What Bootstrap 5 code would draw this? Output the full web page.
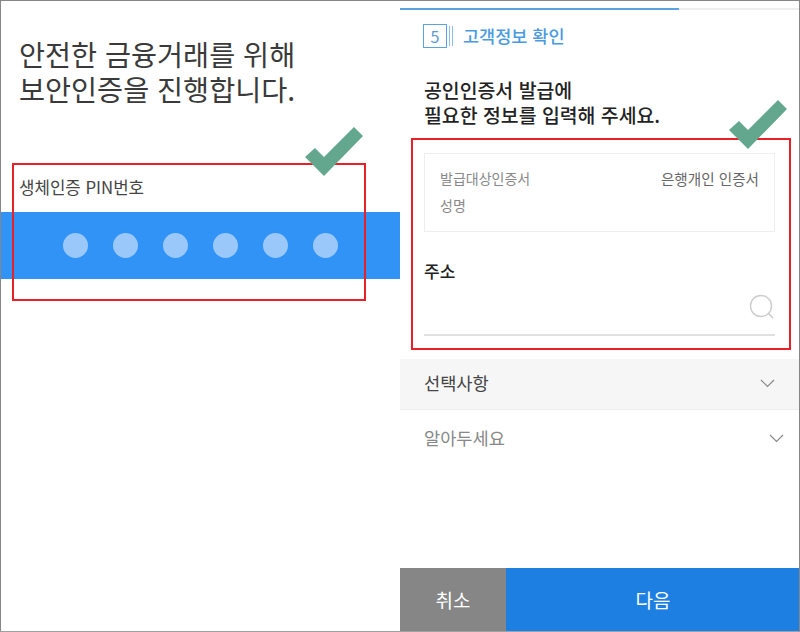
<!DOCTYPE html>
<html lang="ko">
<head>
<meta charset="utf-8">
<title>보안인증</title>
<link rel="stylesheet" href="https://cdn.jsdelivr.net/npm/bootstrap@5.3.0/dist/css/bootstrap.min.css">
<style>
html,body{margin:0;height:632px;overflow:hidden;background:#fff;font-family:"Noto Sans CJK KR","Noto Sans",sans-serif}
.stage{position:relative;width:800px;height:632px;overflow:hidden}
.frame-edge{position:absolute;inset:0;border:1px solid #868686;border-bottom-color:#a0a0a0;pointer-events:none}
.pane{width:400px;height:632px}
.secure-title{font-size:28.3px;line-height:35px;font-weight:400;color:#3a3a3a;margin:36px 0 0 19px}
.pin-label{font-size:16.8px;line-height:24px;color:#444;margin:69px 0 0 19px}
.pin-bar{height:67px;margin-top:13px;background:#3193f5;gap:25px;padding-left:63px}
.pin-dot{width:25px;height:25px;border-radius:50%;background:#9ac8fb}
.progress-track{height:2px;margin-top:8px;background:#eee}
.progress-fill{height:2px;width:279px;background:#5ba3e0}
.step-row{margin:14px 0 0 23px;height:24px}
.step-box{width:24px;height:24px;border:1px solid #5ba3e0;color:#5b9bd5;font-size:16px;line-height:22px;text-align:center}
.step-line{width:1px;height:20px;background:#8cbde8;margin-left:2px}
.step-title{font-size:17.5px;line-height:22px;font-weight:500;color:#4a9ae0;margin-left:10px}
.lead-text{font-size:19.4px;line-height:25px;font-weight:500;color:#222;margin:29px 0 0 24px}
.info-box{width:351px;height:79px;margin:26px 0 0 24px;border:1px solid #eee;border-radius:0;padding:11px 15px 0;font-size:14px;line-height:27px;color:#888}
.info-value{color:#666;font-size:14.6px}
.addr-label{font-size:17px;line-height:24px;font-weight:500;color:#222;margin:27px 0 0 24px}
.addr-field{width:351px;height:53px;margin:0 0 0 24px;border-bottom:2px solid #e0e0e0;padding-top:11px}
.fold-list{margin-top:23px}
.fold-row{height:51px;border-width:0 0 2px;border-style:solid;border-color:#eee;padding:0 25px 2px 24px;font-size:17.6px;background:#f6f6f6;color:#444;border-radius:0}
.fold-row.plain{height:58px;background:#fff;color:#888;padding-right:16px;padding-bottom:2px}
.action-bar{height:64px}
.btn-cancel,.btn-next{border:0;border-radius:0;color:#fff;font-size:19px;height:64px;padding:0}
.btn-cancel{width:106px;background:#868686}
.btn-next{flex:1;background:#1e7fe2}
.red-box{position:absolute;border:2px solid #e8202a}
.box-a{left:12px;top:163px;width:354px;height:138px}
.box-b{left:411px;top:138px;width:380px;height:212px}
.tick{position:absolute;width:58px;height:49px}
.tick-a{left:305px;top:127px}
.tick-b{left:729px;top:100px}
</style>
</head>
<body>
<div class="stage">
  <div class="d-flex">
    <section class="pane">
      <h1 class="secure-title">안전한 금융거래를 위해<br>보안인증을 진행합니다.</h1>
      <div class="pin-label">생체인증 PIN번호</div>
      <div class="pin-bar d-flex align-items-center">
        <span class="pin-dot"></span><span class="pin-dot"></span><span class="pin-dot"></span><span class="pin-dot"></span><span class="pin-dot"></span><span class="pin-dot"></span>
      </div>
    </section>
    <section class="pane d-flex flex-column">
      <div class="progress-track"><div class="progress-fill"></div></div>
      <div class="step-row d-flex align-items-center">
        <span class="step-box">5</span><span class="step-line"></span><span class="step-line"></span>
        <span class="step-title">고객정보 확인</span>
      </div>
      <p class="lead-text mb-0">공인인증서 발급에<br>필요한 정보를 입력해 주세요.</p>
      <div class="card info-box">
        <div class="d-flex justify-content-between"><span>발급대상인증서</span><span class="info-value">은행개인 인증서</span></div>
        <div>성명</div>
      </div>
      <div class="addr-label">주소</div>
      <div class="addr-field d-flex justify-content-end">
        <svg width="26" height="26" viewBox="0 0 26 26" fill="none" stroke="#ccc" stroke-width="1.4"><circle cx="12" cy="12" r="10.5"/><path d="M19.5 19.5L24 24" stroke-width="1.6"/></svg>
      </div>
      <div class="list-group list-group-flush fold-list">
        <div class="list-group-item fold-row d-flex justify-content-between align-items-center">
          <span>선택사항</span>
          <svg width="15" height="9" viewBox="0 0 15 9" fill="none" stroke="#888" stroke-width="1.2"><path d="M1 1l6.5 6.5L14 1"/></svg>
        </div>
        <div class="list-group-item fold-row plain d-flex justify-content-between align-items-center">
          <span>알아두세요</span>
          <svg width="15" height="9" viewBox="0 0 15 9" fill="none" stroke="#888" stroke-width="1.2"><path d="M1 1l6.5 6.5L14 1"/></svg>
        </div>
      </div>
      <div class="action-bar d-flex mt-auto">
        <button type="button" class="btn btn-cancel">취소</button>
        <button type="button" class="btn btn-next">다음</button>
      </div>
    </section>
  </div>
  <div class="frame-edge"></div>
  <div class="red-box box-a"></div>
  <div class="red-box box-b"></div>
  <svg class="tick tick-a" viewBox="0 0 58 49"><polygon fill="#64a78f" points="0,30 10,21 19,30 49,0 58,9 19,49"/></svg>
  <svg class="tick tick-b" viewBox="0 0 58 49"><polygon fill="#64a78f" points="0,30 10,21 19,30 49,0 58,9 19,49"/></svg>
</div>
<script src="https://cdn.jsdelivr.net/npm/bootstrap@5.3.0/dist/js/bootstrap.bundle.min.js"></script>
</body>
</html>
